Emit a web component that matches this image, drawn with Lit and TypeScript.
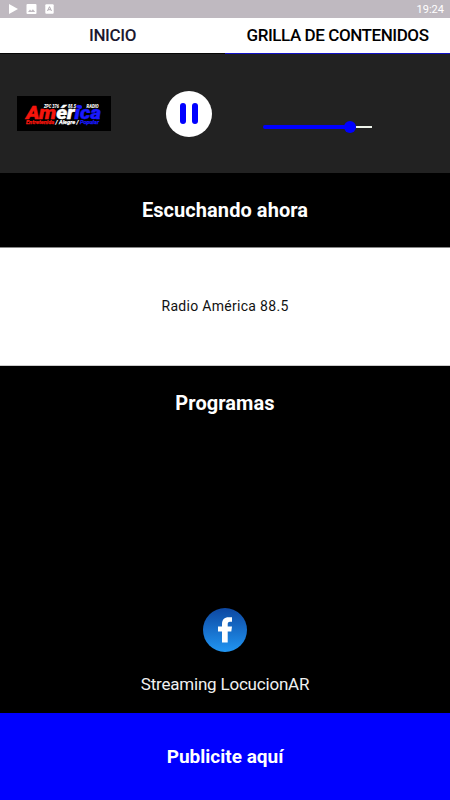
import { LitElement, html, css } from "lit";
import { customElement, state } from "lit/decorators.js";
import { styleMap } from "lit/directives/style-map.js";

@customElement("status-bar")
class StatusBar extends LitElement {
  static styles = css`
    :host { display: flex; align-items: center; justify-content: space-between; height: 18px; box-sizing: border-box; padding: 1px 6px 0 0; background: #bfb9c0; color: #fff; }
    svg { display: block; }
    .time { font-size: 11px; line-height: 17px; }
  `;
  render() {
    return html`
      <svg width="60" height="17" viewBox="0 1 60 17" fill="#fff">
        <path d="M9 4v10l9-5z" />
        <rect x="26.5" y="4" width="10" height="10" rx="1" />
        <path d="M28 12l2-2.4 1.3 1.5 1.6-1.9 2.3 2.8z" fill="#bfb9c0" />
        <rect x="45.3" y="4.3" width="8.4" height="9.4" rx="1" />
        <path d="M47.5 11l2-4.3 2 4.3M48.3 9.7h2.4" fill="none" stroke="#aaa4ac" stroke-width=".9" />
      </svg>
      <span class="time">19:24</span>
    `;
  }
}

@customElement("tab-strip")
class TabStrip extends LitElement {
  static styles = css`
    :host { display: grid; grid-template-columns: 1fr 1fr; height: 36px; background: #fff; }
    .tab { display: flex; align-items: center; justify-content: center; box-sizing: border-box; padding-bottom: 1px; font-size: 17px; line-height: 20px; font-weight: 500; letter-spacing: -0.4px; white-space: nowrap; color: #1c1830; border-bottom: 1px solid #060606; }
    .on { color: #000; letter-spacing: -0.43px; border-bottom-color: #1010c8; }
  `;
  render() {
    return html`<div class="tab">INICIO</div><div class="tab on">GRILLA DE CONTENIDOS</div>`;
  }
}

@customElement("radio-logo")
class RadioLogo extends LitElement {
  static styles = css`
    :host { display: block; width: 94px; height: 35px; }
    svg { display: block; }
    .small { font: italic 900 5.4px Roboto, sans-serif; }
    .name { font: italic 900 18.5px Roboto, sans-serif; stroke-width: 0.4px; }
    .tag { font: italic 700 5.6px Roboto, sans-serif; stroke-width: 0.25px; }
    .red { fill: #f5150c; stroke: #f5150c; }
    .white { fill: #fff; stroke: #fff; }
    .blue { fill: #1a1aff; stroke: #1a1aff; }
    .small.white, circle { stroke: none; }
  `;
  render() {
    return html`
      <svg width="94" height="35" viewBox="0 0 94 35">
        <rect width="94" height="35" fill="#000" />
        <text class="small white" x="27" y="12" textLength="15" lengthAdjust="spacingAndGlyphs">ZPC 376</text>
        <text class="small white" x="51" y="12" textLength="8" lengthAdjust="spacingAndGlyphs">88.5</text>
        <text class="small white" x="69.5" y="12" textLength="12" lengthAdjust="spacingAndGlyphs">RADIO</text>
        <circle cx="63" cy="11" r="2" fill="#1a1aff" />
        <text class="name" x="9" y="23" textLength="75" lengthAdjust="spacingAndGlyphs"><tspan class="red">Am</tspan><tspan class="white">ér</tspan><tspan class="blue">ica</tspan></text>
        <text class="tag" x="9" y="27.6" textLength="73" lengthAdjust="spacingAndGlyphs"><tspan class="red">Entretenida</tspan><tspan class="white"> / Alegre / </tspan><tspan class="blue">Popular</tspan></text>
      </svg>
    `;
  }
}

@customElement("radio-player")
class RadioPlayer extends LitElement {
  @state() volume = 80;

  static styles = css`
    :host { display: flex; align-items: center; box-sizing: border-box; height: 119px; padding-left: 17px; background: #222; }
    .play { margin-left: 55px; width: 46px; height: 46px; border-radius: 50%; background: #fff; display: flex; align-items: center; justify-content: center; gap: 6.4px; }
    .bar { width: 6px; height: 21.5px; border-radius: 3px; background: #00f; }
    .volume { display: flex; align-items: center; width: 109px; height: 12px; margin: 27px 0 0 51px; }
    .filled { height: 4px; border-radius: 2px; background: #00f; margin-right: -6px; }
    .knob { flex: none; width: 12px; height: 12px; border-radius: 50%; background: #00f; }
    .rest { flex: 1; height: 2px; background: #eef3ea; }
  `;
  render() {
    return html`
      <radio-logo></radio-logo>
      <div class="play"><span class="bar"></span><span class="bar"></span></div>
      <div class="volume">
        <span class="filled" style=${styleMap({ width: `${this.volume}%` })}></span>
        <span class="knob"></span>
        <span class="rest"></span>
      </div>
    `;
  }
}

@customElement("app-root")
class AppRoot extends LitElement {
  static styles = css`
    :host { display: flex; flex-direction: column; height: 800px; background: #000; color: #fff; font-family: Roboto, sans-serif; overflow: hidden; }
    .band { display: flex; align-items: center; justify-content: center; box-sizing: border-box; white-space: nowrap; }
    .heading { height: 74px; font-size: 20px; line-height: 24px; font-weight: 700; letter-spacing: 0.07px; }
    .now { height: 119px; padding-bottom: 1px; background: #fff; color: #111; font-size: 14px; line-height: 18px; letter-spacing: 0.3px; border-top: 1px solid #888; border-bottom: 1px solid #ccc; }
    .social { flex: 1; display: flex; flex-direction: column; align-items: center; justify-content: flex-end; gap: 22px; padding-bottom: 19px; font-size: 17px; line-height: 20px; letter-spacing: -0.2px; color: #f0f0f0; }
    .social svg { display: block; }
    .advert { height: 87px; background: #00f; font-size: 19px; line-height: 22px; font-weight: 700; }
  `;
  render() {
    return html`
      <status-bar></status-bar>
      <tab-strip></tab-strip>
      <radio-player></radio-player>
      <div class="band heading"><span>Escuchando ahora</span></div>
      <div class="band now"><span>Radio América 88.5</span></div>
      <div class="band heading"><span>Programas</span></div>
      <div class="social">
        <svg width="44" height="44" viewBox="0 0 44 44">
          <defs>
            <linearGradient id="disc" x1="0" y1="0" x2="0" y2="1">
              <stop offset="0" stop-color="#0d47a1" />
              <stop offset="1" stop-color="#2196f3" />
            </linearGradient>
          </defs>
          <circle cx="22" cy="22" r="22" fill="url(#disc)" />
          <path d="M19 34.5V23.5h-4v-5h4v-2.2c0-4.5 2.4-7 6.6-7H29v4.5h-2c-1.8 0-2.3.9-2.3 2.4v2.3H29l-.7 5h-3.6v11z" fill="#fff" />
        </svg>
        <span>Streaming LocucionAR</span>
      </div>
      <div class="band advert"><span>Publicite aquí</span></div>
    `;
  }
}
